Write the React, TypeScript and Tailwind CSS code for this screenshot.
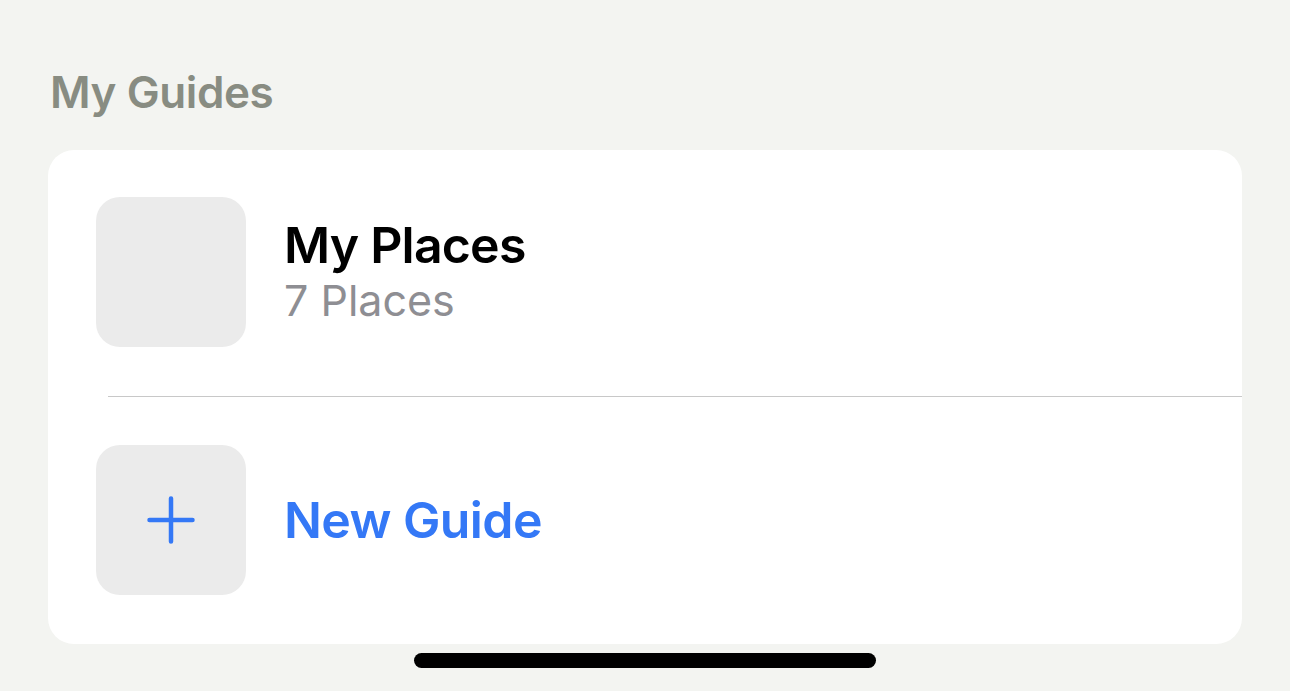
import React from 'react';

const font = { fontFamily: 'Inter, "Noto Sans", sans-serif' };

const Thumb: React.FC<{ children?: React.ReactNode }> = ({ children }) => (
  <div className="w-[150px] h-[150px] rounded-[24px] bg-[#ebebeb] flex items-center justify-center flex-shrink-0">
    {children}
  </div>
);

const App: React.FC = () => {
  return (
    <div className="w-[1290px] h-[691px] bg-[#f3f4f1] flex flex-col overflow-hidden" style={font}>
      <h2 className="ml-[50px] mt-[64px] text-[44px] leading-[56px] font-semibold text-[#888c82] tracking-[-0.4px]">
        My Guides
      </h2>
      <div className="mx-[48px] mt-[30px] bg-white rounded-[26px] flex flex-col">
        <div className="flex items-center pl-[48px] pt-[47px] pb-[49px]">
          <Thumb />
          <div className="ml-[38px] flex flex-col">
            <span className="text-[50px] leading-[56px] font-semibold text-black tracking-[-0.8px]">My Places</span>
            <span className="text-[43px] leading-[54px] text-[#8e8e93]">7 Places</span>
          </div>
        </div>
        <div className="ml-[60px] h-px bg-[#c8c8c8]" />
        <div className="flex items-center pl-[48px] pt-[48px] pb-[49px]">
          <Thumb>
            <svg width="48" height="48" viewBox="0 0 48 48" fill="none">
              <path d="M24 2.5v43M2.5 24h43" stroke="#3478f6" strokeWidth="4.5" strokeLinecap="round" />
            </svg>
          </Thumb>
          <span className="ml-[38px] text-[50px] leading-[56px] font-semibold text-[#3478f6] tracking-[-0.6px]">
            New Guide
          </span>
        </div>
      </div>
      <div className="mt-[9px] mx-auto w-[462px] h-[15px] rounded-full bg-black" />
    </div>
  );
};

export default App;
